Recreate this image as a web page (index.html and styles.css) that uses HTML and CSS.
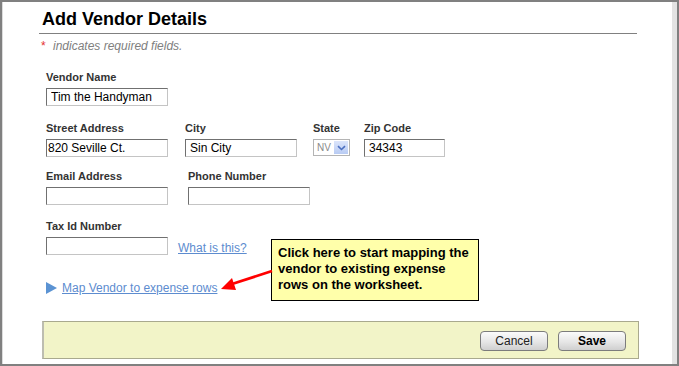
FILE: index.html
```html
<!DOCTYPE html>
<html lang="en">
<head>
  <meta charset="UTF-8" />
  <title>Add Vendor Details</title>
  <link rel="stylesheet" href="styles.css">
</head>
<body>

<div class="window">
  <div class="page">
    <h1>Add Vendor Details</h1>
    <div class="rule"></div>
    <p class="required"><span class="star">*</span> indicates required fields.</p>

    <form class="vendor-form">
      <div class="row row-1">
        <div class="field">
          <label>Vendor Name</label>
          <input type="text" class="txt w-std" value="Tim the Handyman">
        </div>
      </div>

      <div class="row row-2">
        <div class="field">
          <label>Street Address</label>
          <input type="text" class="txt w-std flush" value="820 Seville Ct.">
        </div>
        <div class="field f-city">
          <label>City</label>
          <input type="text" class="txt w-city" value="Sin City">
        </div>
        <div class="field f-state">
          <label>State</label>
          <div class="state-select">
            <span class="state-val">NV</span>
            <span class="state-btn">
              <svg width="9" height="6" viewBox="0 0 9 6"><path d="M1 1.2 L4.5 4.5 L8 1.2" fill="none" stroke="#4a6fc0" stroke-width="1.6"/></svg>
            </span>
          </div>
        </div>
        <div class="field f-zip">
          <label>Zip Code</label>
          <input type="text" class="txt w-zip" value="34343">
        </div>
      </div>

      <div class="row row-3">
        <div class="field">
          <label>Email Address</label>
          <input type="text" class="txt w-std">
        </div>
        <div class="field f-phone">
          <label>Phone Number</label>
          <input type="text" class="txt w-std">
        </div>
      </div>

      <div class="row row-4">
        <div class="field">
          <label>Tax Id Number</label>
          <div class="inline">
            <input type="text" class="txt w-std">
            <a href="#" class="link what">What is this?</a>
          </div>
        </div>
      </div>

      <div class="map-row">
        <span class="tri"></span>
        <a href="#" class="link">Map Vendor to expense rows</a>
      </div>
    </form>

    <div class="footer-bar">
      <button type="button" class="btn">Cancel</button>
      <button type="button" class="btn btn-save">Save</button>
    </div>
  </div>

  <div class="callout">Click here to start mapping the vendor to existing expense rows on the worksheet.</div>
  <svg class="arrow" width="60" height="30" viewBox="0 0 60 30">
    <line x1="52" y1="3" x2="12" y2="16" stroke="#ff0000" stroke-width="2.8"/>
    <polygon points="1,21 12,10 16,22" fill="#ff0000"/>
  </svg>
</div>

</body>
</html>
```

FILE: styles.css
```css
body {
  margin: 0;
  font-family: "Liberation Sans", Arial, sans-serif;
  background: #fff;
}

.window {
  position: relative;
  width: 679px;
  height: 366px;
  box-sizing: border-box;
  border: 2px solid #808080;
  background: #fff;
  box-shadow: inset -5px 0 0 #e3e3e3, inset 1px 0 0 #dcdcdc;
  overflow: hidden;
}

.page {
  padding-left: 37px;
}

h1 {
  margin: 0;
  padding: 6px 0 0 3px;
  font-size: 18px;
  line-height: 22px;
  font-weight: bold;
  color: #000;
}

.rule {
  width: 598px;
  height: 1px;
  margin-top: 3px;
  background: #808080;
}

.required {
  margin: 5px 0 0 2px;
  font-size: 12px;
  line-height: 14px;
  font-style: italic;
  color: #808080;
}

.star {
  color: #e53030;
  font-style: normal;
  margin-right: 4px;
}

.vendor-form {
  padding-left: 7px;
}

.row {
  display: flex;
  align-items: flex-start;
}

.row-1 { margin-top: 18px; }
.row-2 { margin-top: 16px; }
.row-3 { margin-top: 13px; }
.row-4 { margin-top: 15px; }

.field {
  display: flex;
  flex-direction: column;
}

.field label {
  font-size: 11px;
  line-height: 13px;
  font-weight: bold;
  color: #333;
  margin-bottom: 4px;
}

.f-city { margin-left: 17px; }
.f-state { margin-left: 16px; }
.f-zip { margin-left: 14px; }
.f-phone { margin-left: 20px; }

.txt {
  box-sizing: border-box;
  height: 18px;
  margin: 0;
  padding: 0 4px;
  border: 1px solid;
  border-color: #707070 #c4c4c4 #c4c4c4 #707070;
  font-family: "Liberation Sans", Arial, sans-serif;
  font-size: 12px;
  color: #000;
  background: #fff;
  outline: none;
}

.txt.flush { padding-left: 1px; }

.w-std { width: 122px; }
.w-city { width: 112px; }
.w-zip { width: 81px; }

.state-select {
  box-sizing: border-box;
  width: 37px;
  height: 17px;
  display: flex;
  align-items: stretch;
  border: 1px solid #b4b4b4;
  background: #fff;
}

.state-val {
  flex: 1;
  padding-left: 3px;
  font-size: 10px;
  line-height: 15px;
  color: #8a8a8a;
}

.state-btn {
  width: 14px;
  margin: 1px;
  display: flex;
  align-items: center;
  justify-content: center;
  background: linear-gradient(#dbe5fb, #b8cbf3);
}

.inline {
  display: flex;
  align-items: center;
}

.link {
  font-size: 12px;
  color: #5d8ccf;
  text-decoration: underline;
}

.what {
  margin-left: 10px;
  position: relative;
  top: 2px;
}

.map-row {
  display: flex;
  align-items: center;
  margin-top: 26px;
  height: 14px;
  line-height: 14px;
}

.tri {
  width: 0;
  height: 0;
  border-top: 6px solid transparent;
  border-bottom: 6px solid transparent;
  border-left: 11px solid #5b93d3;
  margin-right: 5px;
}

.footer-bar {
  display: flex;
  justify-content: flex-end;
  gap: 10px;
  box-sizing: border-box;
  width: 597px;
  height: 38px;
  margin: 26px 0 0 3px;
  padding: 9px 12px 0 0;
  background: #f2f4c8;
  border: 1px solid #a9a98e;
  border-left: 2px solid #bdbdb0;
}

.btn {
  box-sizing: border-box;
  width: 68px;
  height: 20px;
  padding: 0;
  border: 1px solid #7c7c7c;
  border-radius: 4px;
  background: linear-gradient(#fbfbfb, #e6e6e6 55%, #cfcfcf);
  font-family: "Liberation Sans", Arial, sans-serif;
  font-size: 12px;
  color: #222;
  cursor: pointer;
}

.btn-save {
  font-weight: bold;
  color: #000;
}

.callout {
  position: absolute;
  left: 269px;
  top: 237px;
  width: 208px;
  height: 62px;
  box-sizing: border-box;
  padding: 5px 6px 0 6px;
  background: #ffffaa;
  border: 1px solid #000;
  font-size: 13px;
  line-height: 16px;
  font-weight: bold;
  color: #000;
}

.arrow {
  position: absolute;
  left: 218px;
  top: 266px;
}
```
